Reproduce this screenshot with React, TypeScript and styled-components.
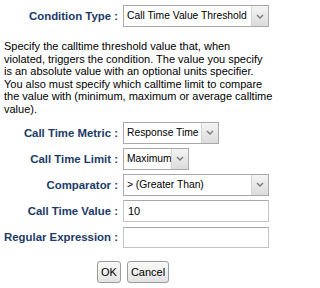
import React from "react";
import styled, { createGlobalStyle } from "styled-components";

const Global = createGlobalStyle`
  html, body { margin: 0; padding: 0; background: #fff; }
  body { font-family: "Liberation Sans", Arial, sans-serif; font-size: 11px; color: #000; }
`;

const Page = styled.div`
  width: 274px;
  height: 288px;
  padding: 5px 0 0 4px;
  box-sizing: border-box;
  overflow: hidden;
`;

const Row = styled.div<{ $mt?: number }>`
  display: grid;
  grid-template-columns: 114px 146px;
  column-gap: 5px;
  align-items: center;
  margin-top: ${(p) => p.$mt ?? 5}px;
`;

const Label = styled.label`
  text-align: right;
  font-weight: bold;
  font-size: 11.4px;
  color: #1c3a68;
  white-space: nowrap;
`;

const Help = styled.p`
  margin: 13px 0 0 0;
  font-size: 11px;
  line-height: 12.6px;
  color: #000;
  white-space: nowrap;
`;

const SelectBox = styled.div<{ $w: number }>`
  width: ${(p) => p.$w}px;
  height: 22px;
  box-sizing: border-box;
  border: 1px solid #a9a9a9;
  display: flex;
  background: #fff;
`;

const SelectText = styled.div`
  flex: 1;
  padding-left: 3px;
  line-height: 19px;
  font-size: 10.3px;
  white-space: nowrap;
  overflow: hidden;
`;

const ArrowBox = styled.div`
  width: 16px;
  flex: none;
  border-left: 1px solid #d4d4d4;
  background: linear-gradient(#f4f4f4, #dcdcdc);
  display: flex;
  align-items: center;
  justify-content: center;
`;

const TextInput = styled.div<{ $h?: number }>`
  width: 146px;
  height: ${(p) => p.$h ?? 22}px;
  box-sizing: border-box;
  border: 1px solid #c4c4c4;
  border-top-color: #a9a9a9;
  padding-left: 4px;
  line-height: 20px;
  font-size: 11px;
`;

const ButtonRow = styled.div`
  display: flex;
  gap: 6px;
  padding-left: 93px;
  margin-top: 13px;
`;

const Button = styled.button`
  height: 22px;
  padding: 0 3px;
  font-family: "Liberation Sans", Arial, sans-serif;
  font-size: 11px;
  color: #000;
  border: 1px solid #9a9a9a;
  border-radius: 3px;
  background: linear-gradient(#fafafa, #e2e2e2);
`;

const Chevron = () => (
  <svg width="8" height="5" viewBox="0 0 8 5">
    <path d="M1 1 L4 4 L7 1" fill="none" stroke="#7a7a7a" strokeWidth="1.4" />
  </svg>
);

const Select = ({ w, value }: { w: number; value: string }) => (
  <SelectBox $w={w}>
    <SelectText>{value}</SelectText>
    <ArrowBox>
      <Chevron />
    </ArrowBox>
  </SelectBox>
);

export default function App() {
  return (
    <Page>
      <Global />
      <Row $mt={0}>
        <Label>Condition Type :</Label>
        <Select w={146} value="Call Time Value Threshold" />
      </Row>
      <Help>
        Specify the calltime threshold value that, when
        <br />
        violated, triggers the condition. The value you specify
        <br />
        is an absolute value with an optional units specifier.
        <br />
        You also must specify which calltime limit to compare
        <br />
        the value with (minimum, maximum or average calltime
        <br />
        value).
      </Help>
      <Row $mt={6}>
        <Label>Call Time Metric :</Label>
        <Select w={96} value="Response Time" />
      </Row>
      <Row $mt={4}>
        <Label>Call Time Limit :</Label>
        <Select w={66} value="Maximum" />
      </Row>
      <Row $mt={4}>
        <Label>Comparator :</Label>
        <Select w={146} value="> (Greater Than)" />
      </Row>
      <Row $mt={4}>
        <Label>Call Time Value :</Label>
        <TextInput>10</TextInput>
      </Row>
      <Row $mt={5}>
        <Label>Regular Expression :</Label>
        <TextInput $h={21} />
      </Row>
      <ButtonRow>
        <Button>OK</Button>
        <Button>Cancel</Button>
      </ButtonRow>
    </Page>
  );
}
